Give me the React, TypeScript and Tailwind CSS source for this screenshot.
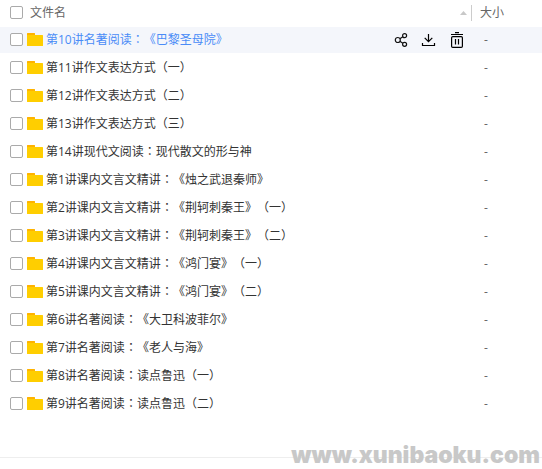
import { useState } from 'react';

const initialFiles = [
  '第10讲名著阅读：《巴黎圣母院》',
  '第11讲作文表达方式（一）',
  '第12讲作文表达方式（二）',
  '第13讲作文表达方式（三）',
  '第14讲现代文阅读：现代散文的形与神',
  '第1讲课内文言文精讲：《烛之武退秦师》',
  '第2讲课内文言文精讲：《荆轲刺秦王》（一）',
  '第3讲课内文言文精讲：《荆轲刺秦王》（二）',
  '第4讲课内文言文精讲：《鸿门宴》（一）',
  '第5讲课内文言文精讲：《鸿门宴》（二）',
  '第6讲名著阅读：《大卫科波菲尔》',
  '第7讲名著阅读：《老人与海》',
  '第8讲名著阅读：读点鲁迅（一）',
  '第9讲名著阅读：读点鲁迅（二）',
];

const checkboxClass =
  'size-[13px] shrink-0 appearance-none rounded-xs border border-[#aaaaaa] bg-white checked:bg-[#4a8cf7]';

function FolderIcon() {
  return (
    <svg width="16" height="13" viewBox="0 0 16 13" className="shrink-0" aria-hidden="true">
      <path d="M0 .5a.5.5 0 0 1 .5-.5h7a.5.5 0 0 1 .5.5V4H0z" fill="#ffb300" />
      <path d="M0 2h15.5a.5.5 0 0 1 .5.5v10a.5.5 0 0 1-.5.5H.5a.5.5 0 0 1-.5-.5z" fill="#ffce00" />
    </svg>
  );
}

function ShareIcon() {
  return (
    <svg width="16" height="16" viewBox="0 0 16 16" fill="none" stroke="#111111" strokeWidth="1.2">
      <circle cx="4.8" cy="8" r="2.5" />
      <circle cx="11.6" cy="3.7" r="2" />
      <circle cx="11.6" cy="12.3" r="2" />
      <path d="M6.9 6.7l2.9-1.9M6.9 9.3l2.9 1.9" />
    </svg>
  );
}

function DownloadIcon() {
  return (
    <svg width="16" height="16" viewBox="0 0 16 16" fill="none" stroke="#000000" strokeWidth="1.2">
      <path d="M7.5 2v7.5M3.7 5.9l3.8 3.8 3.8-3.8M1.5 11v2.5h12V11" />
    </svg>
  );
}

function TrashIcon() {
  return (
    <svg width="16" height="16" viewBox="0 0 16 16" fill="none" stroke="#000000" strokeWidth="1.2">
      <path d="M6 .6h4M2 2.5h12M6.5 7v5.5M9.5 7v5.5" />
      <rect x="2.6" y="4.6" width="10.8" height="10.8" rx="1.2" />
    </svg>
  );
}

// the colon sits in the middle of its cell, as in Microsoft YaHei
function FileName({ name }: { name: string }) {
  const [title, rest] = name.split('：');
  if (!rest) return <>{name}</>;
  return (
    <>
      {title}
      <span className="font-['Noto_Sans_CJK_JP',sans-serif] leading-none">：</span>
      {rest}
    </>
  );
}

export default function App() {
  const [active, setActive] = useState(0);
  const [selected, setSelected] = useState<number[]>([]);

  const toggle = (i: number) =>
    setSelected(selected.includes(i) ? selected.filter((n) => n !== i) : [...selected, i]);

  return (
    <div className="bg-white font-['Open_Sans','Noto_Sans_CJK_SC',sans-serif] text-xs text-[#333333] [text-spacing-trim:space-all]">
      <table className="w-full table-fixed border-separate border-spacing-x-0 border-spacing-y-0.5">
        <thead>
          <tr className="h-[23px] text-left text-[#666666]">
            <th className="p-0 pb-0.5 font-normal">
              <div className="flex items-center pl-2.5">
                <label className="flex items-center gap-[7px]">
                  <input
                    type="checkbox"
                    className={checkboxClass}
                    checked={selected.length === initialFiles.length}
                    onChange={(e) => setSelected(e.target.checked ? initialFiles.map((_, i) => i) : [])}
                  />
                  文件名
                </label>
                <svg width="7" height="4" viewBox="0 0 7 4" className="mr-1 ml-auto" aria-hidden="true">
                  <path d="M3.5 0L7 4H0z" fill="#c8c8c8" />
                </svg>
              </div>
            </th>
            <th className="w-[71px] p-0 pb-0.5 font-normal">
              <div className="h-4 border-l border-[#cccccc] pl-2 leading-4">大小</div>
            </th>
          </tr>
        </thead>
        <tbody>
          {initialFiles.map((name, i) => (
            <tr key={name} className={i === active ? 'bg-[#f4f6fb]' : undefined}>
              <td className="p-0 pb-px">
                <div className="flex h-[25px] items-center pl-2.5">
                  <input
                    type="checkbox"
                    aria-label={name}
                    className={checkboxClass}
                    checked={selected.includes(i)}
                    onChange={() => toggle(i)}
                  />
                  <a
                    href="#"
                    onMouseEnter={() => setActive(i)}
                    className={
                      i === active
                        ? 'ml-1 flex h-full items-center gap-[3px] whitespace-nowrap text-[#4a8cf7]'
                        : 'ml-1 flex h-full items-center gap-[3px] whitespace-nowrap'
                    }
                  >
                    <FolderIcon />
                    <span>
                      <FileName name={name} />
                    </span>
                  </a>
                  {i === active && (
                    <div className="mr-1.5 ml-auto flex gap-3">
                      <button type="button" aria-label="分享"><ShareIcon /></button>
                      <button type="button" aria-label="下载"><DownloadIcon /></button>
                      <button type="button" aria-label="删除"><TrashIcon /></button>
                    </div>
                  )}
                </div>
              </td>
              <td className="p-0 pl-[13px] text-[#666666]">-</td>
            </tr>
          ))}
        </tbody>
      </table>

      {/* Footer rule with the site mark over it */}
      <div className="relative mt-[38px] h-3 border-t border-[#eeeeee]">
        <div className="absolute right-0.5 bottom-0.5 font-['Inter',sans-serif] text-[23px] leading-6 font-black text-[#c8c8c8]">
          www.xunibaoku.com
        </div>
      </div>
    </div>
  );
}
